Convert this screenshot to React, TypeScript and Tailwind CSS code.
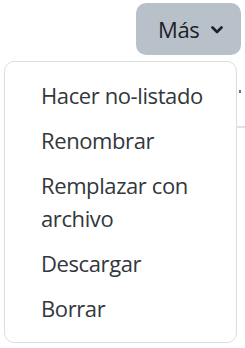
import React from "react";

const items: string[][] = [
  ["Hacer no-listado"],
  ["Renombrar"],
  ["Remplazar con", "archivo"],
  ["Descargar"],
  ["Borrar"],
];

export default function App() {
  return (
    <div
      className="relative w-[245px] h-[348px] bg-white overflow-hidden"
      style={{ fontFamily: '"Open Sans", "Noto Sans", sans-serif' }}
    >
      {/* background content behind the dropdown */}
      <div className="absolute left-[236px] top-[126px] w-[9px] h-[1.5px] bg-[#dee2e6]" />
      <div className="absolute left-[239px] top-[90px] w-[1.5px] h-[3px] bg-[#6c757d]" />

      <div className="flex justify-end pt-[3px] pr-[4px]">
        <button className="flex items-center gap-[12px] h-[52px] w-[105px] pl-[22px] rounded-[10px] bg-[#b8c1ca] text-[#1d2125] text-[22px] leading-[33px] tracking-[-0.4px]">
          <span>Más</span>
          <svg width="12" height="8" viewBox="0 0 12 8" className="mt-[2px]">
            <polyline
              points="1.5,1.5 6,6 10.5,1.5"
              fill="none"
              stroke="#1d2125"
              strokeWidth="2.6"
              strokeLinecap="round"
              strokeLinejoin="round"
            />
          </svg>
        </button>
      </div>

      <div className="absolute left-[4px] top-[61px] w-[233px] h-[282px] rounded-[10px] border-[1.5px] border-[#dcdfe2] bg-white py-[11px]">
        {items.map((lines, i) => (
          <div key={i} className="py-[6px] pl-[36px] pr-[12px] text-[22px] leading-[33px] tracking-[-0.4px] text-[#33373b]">
            {lines.map((l, j) => (
              <div key={j}>{l}</div>
            ))}
          </div>
        ))}
      </div>
    </div>
  );
}
